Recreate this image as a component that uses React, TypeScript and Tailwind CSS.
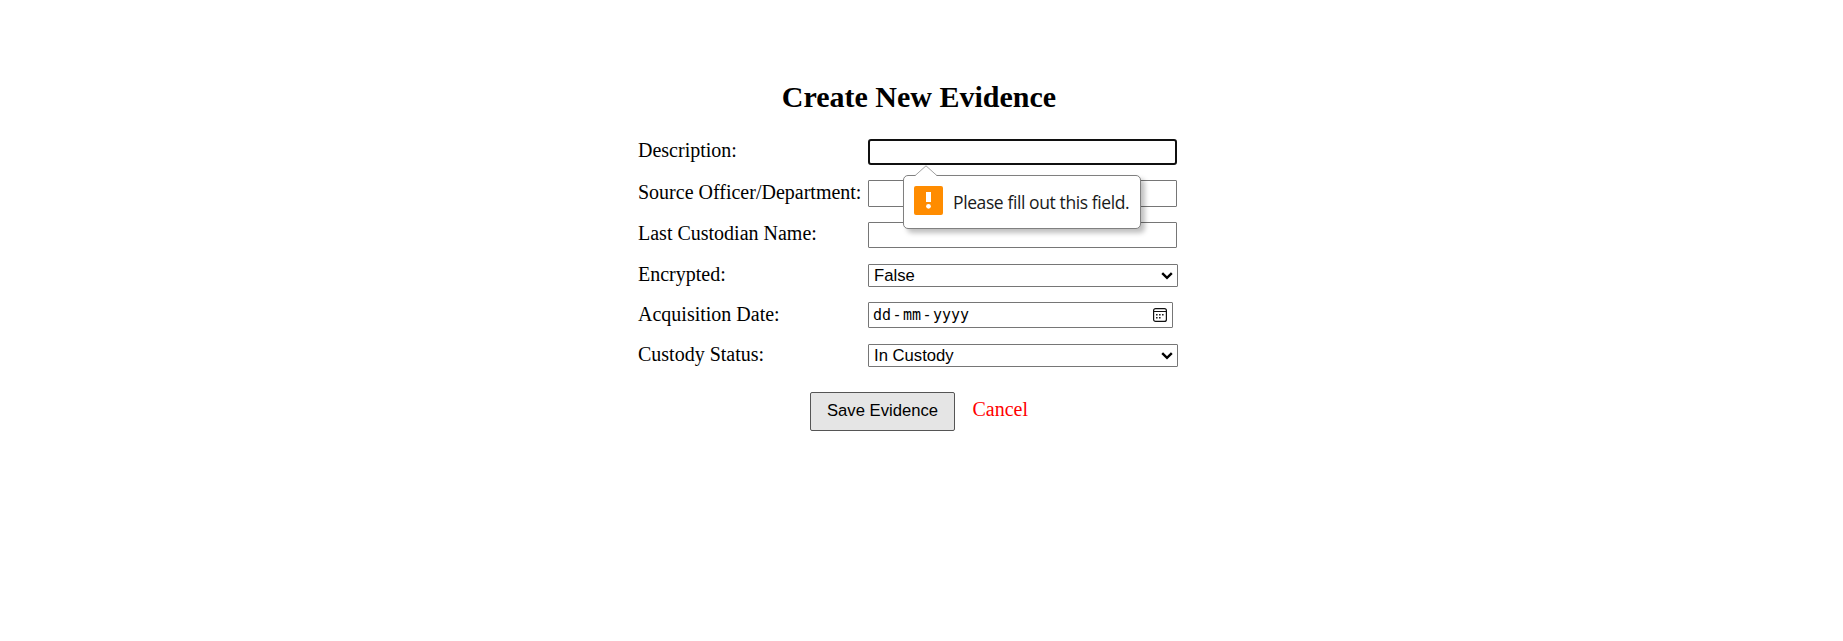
import type { ReactNode } from "react";

function Field({ label, labelClass, children }: { label: string; labelClass: string; children: ReactNode }) {
  return (
    <div className="flex items-start">
      <label className={`w-[230px] shrink-0 whitespace-nowrap text-[20px] leading-[23px] ${labelClass}`}>{label}</label>
      {children}
    </div>
  );
}

function SelectBox({ options }: { options: string[] }) {
  return (
    <div className="relative h-[23px] w-[310px]">
      <select className="block h-full w-full appearance-none rounded-[1px] border border-[#767676] bg-white pl-[5px] font-['Liberation_Sans',Arial,sans-serif] text-[16.67px] leading-[20px] text-black">
        {options.map((o) => (
          <option key={o}>{o}</option>
        ))}
      </select>
      <svg className="pointer-events-none absolute top-[8px] right-[5px] h-[8px] w-[12px]" viewBox="0 0 12 8" fill="none" stroke="#000" strokeWidth="2.4">
        <path d="M1.2 1.2L6 5.9L10.8 1.2" />
      </svg>
    </div>
  );
}

function CalendarIcon() {
  return (
    <svg className="h-[14px] w-[14px]" viewBox="0 0 14 14" fill="none">
      <rect x="0.6" y="0.6" width="12.8" height="12.8" rx="2" stroke="#111" strokeWidth="1.2" />
      <path d="M1 3.5H13" stroke="#111" />
      <path d="M6 6h1.6v1.6H6zM9 6h1.6v1.6H9zM3 6h1.6v1.6H3zM3 9h1.6v1.6H3zM6 9h1.6v1.6H6z" fill="#222" />
    </svg>
  );
}

function ValidationBubble() {
  return (
    <div className="absolute top-[36px] left-[35px] z-10 flex h-[54px] w-[238px] rounded-[5px] border border-[#808080] bg-white shadow-[4px_4px_5px_rgba(0,0,0,0.25)]">
      <svg className="absolute -top-[11px] left-[10px] h-[12px] w-[24px]" viewBox="0 0 24 12">
        <path d="M1 11L12 1L23 11V12H1Z" fill="#fff" />
        <path d="M1 10.7L12 0.8L23 10.7" fill="none" stroke="#a0a0a0" />
      </svg>
      <svg className="mt-[10px] ml-[10px] h-[29px] w-[29px] shrink-0" viewBox="0 0 29 29">
        <rect width="29" height="29" rx="2" fill="#ff8c00" />
        <path d="M12 6H17V16H12Z" fill="#fff" />
        <circle cx="14.5" cy="20.3" r="2.4" fill="#fff" />
      </svg>
      <span className="mt-[13px] ml-[10px] whitespace-nowrap font-['Open_Sans','Noto_Sans',sans-serif] text-[17.5px] leading-[26px] tracking-[-0.4px] text-[#1a1a1a]">
        Please fill out this field.
      </span>
    </div>
  );
}

export default function App() {
  return (
    <main className="min-h-[641px] bg-white pt-[79px] pl-[638px] font-['Liberation_Serif','Times_New_Roman',serif] text-black">
      <form className="w-[562px]" onSubmit={(e) => e.preventDefault()}>
        <h2 className="text-center text-[30px] leading-[36px] font-bold">Create New Evidence</h2>
        <div className="mt-[24px]">
          <Field label="Description:" labelClass="">
            <div className="relative">
              <input className="block h-[26px] w-[309px] rounded-[3px] border-2 border-[#101010] bg-white outline-none" />
              <ValidationBubble />
            </div>
          </Field>
        </div>
        <div className="mt-[15px]">
          <Field label="Source Officer/Department:" labelClass="mt-[1px]">
            <input className="block h-[27px] w-[309px] rounded-[1px] border border-[#767676] bg-white" />
          </Field>
        </div>
        <div className="mt-[15px]">
          <Field label="Last Custodian Name:" labelClass="">
            <input className="block h-[26px] w-[309px] rounded-[1px] border border-[#767676] bg-white" />
          </Field>
        </div>
        <div className="mt-[16px]">
          <Field label="Encrypted:" labelClass="-mt-[1px]">
            <SelectBox options={["False", "True"]} />
          </Field>
        </div>
        <div className="mt-[15px]">
          <Field label="Acquisition Date:" labelClass="mt-[1px]">
            <div className="flex h-[26px] w-[305px] items-center rounded-[1px] border border-[#767676] bg-white pr-[5px] pl-[4px]">
              <div className="flex flex-1 font-['DejaVu_Sans_Mono',monospace] text-[15px] leading-[20px]">
                <span className="w-[18px]">dd</span>
                <span className="w-[12px] text-center">-</span>
                <span className="w-[18px]">mm</span>
                <span className="w-[12px] text-center">-</span>
                <span>yyyy</span>
              </div>
              <CalendarIcon />
            </div>
          </Field>
        </div>
        <div className="mt-[16px]">
          <Field label="Custody Status:" labelClass="-mt-[1px]">
            <SelectBox options={["In Custody", "Released"]} />
          </Field>
        </div>
        <div className="mt-[25px] ml-[172px] flex items-start">
          <button className="h-[39px] w-[145px] rounded-[2px] border border-[#555] bg-[#e5e5e5] pb-[2px] font-['Liberation_Sans',Arial,sans-serif] text-[16.67px]">
            Save Evidence
          </button>
          <a className="mt-[6px] ml-[17.5px] text-[20px] leading-[23px] text-[#ff0000]">Cancel</a>
        </div>
      </form>
    </main>
  );
}
